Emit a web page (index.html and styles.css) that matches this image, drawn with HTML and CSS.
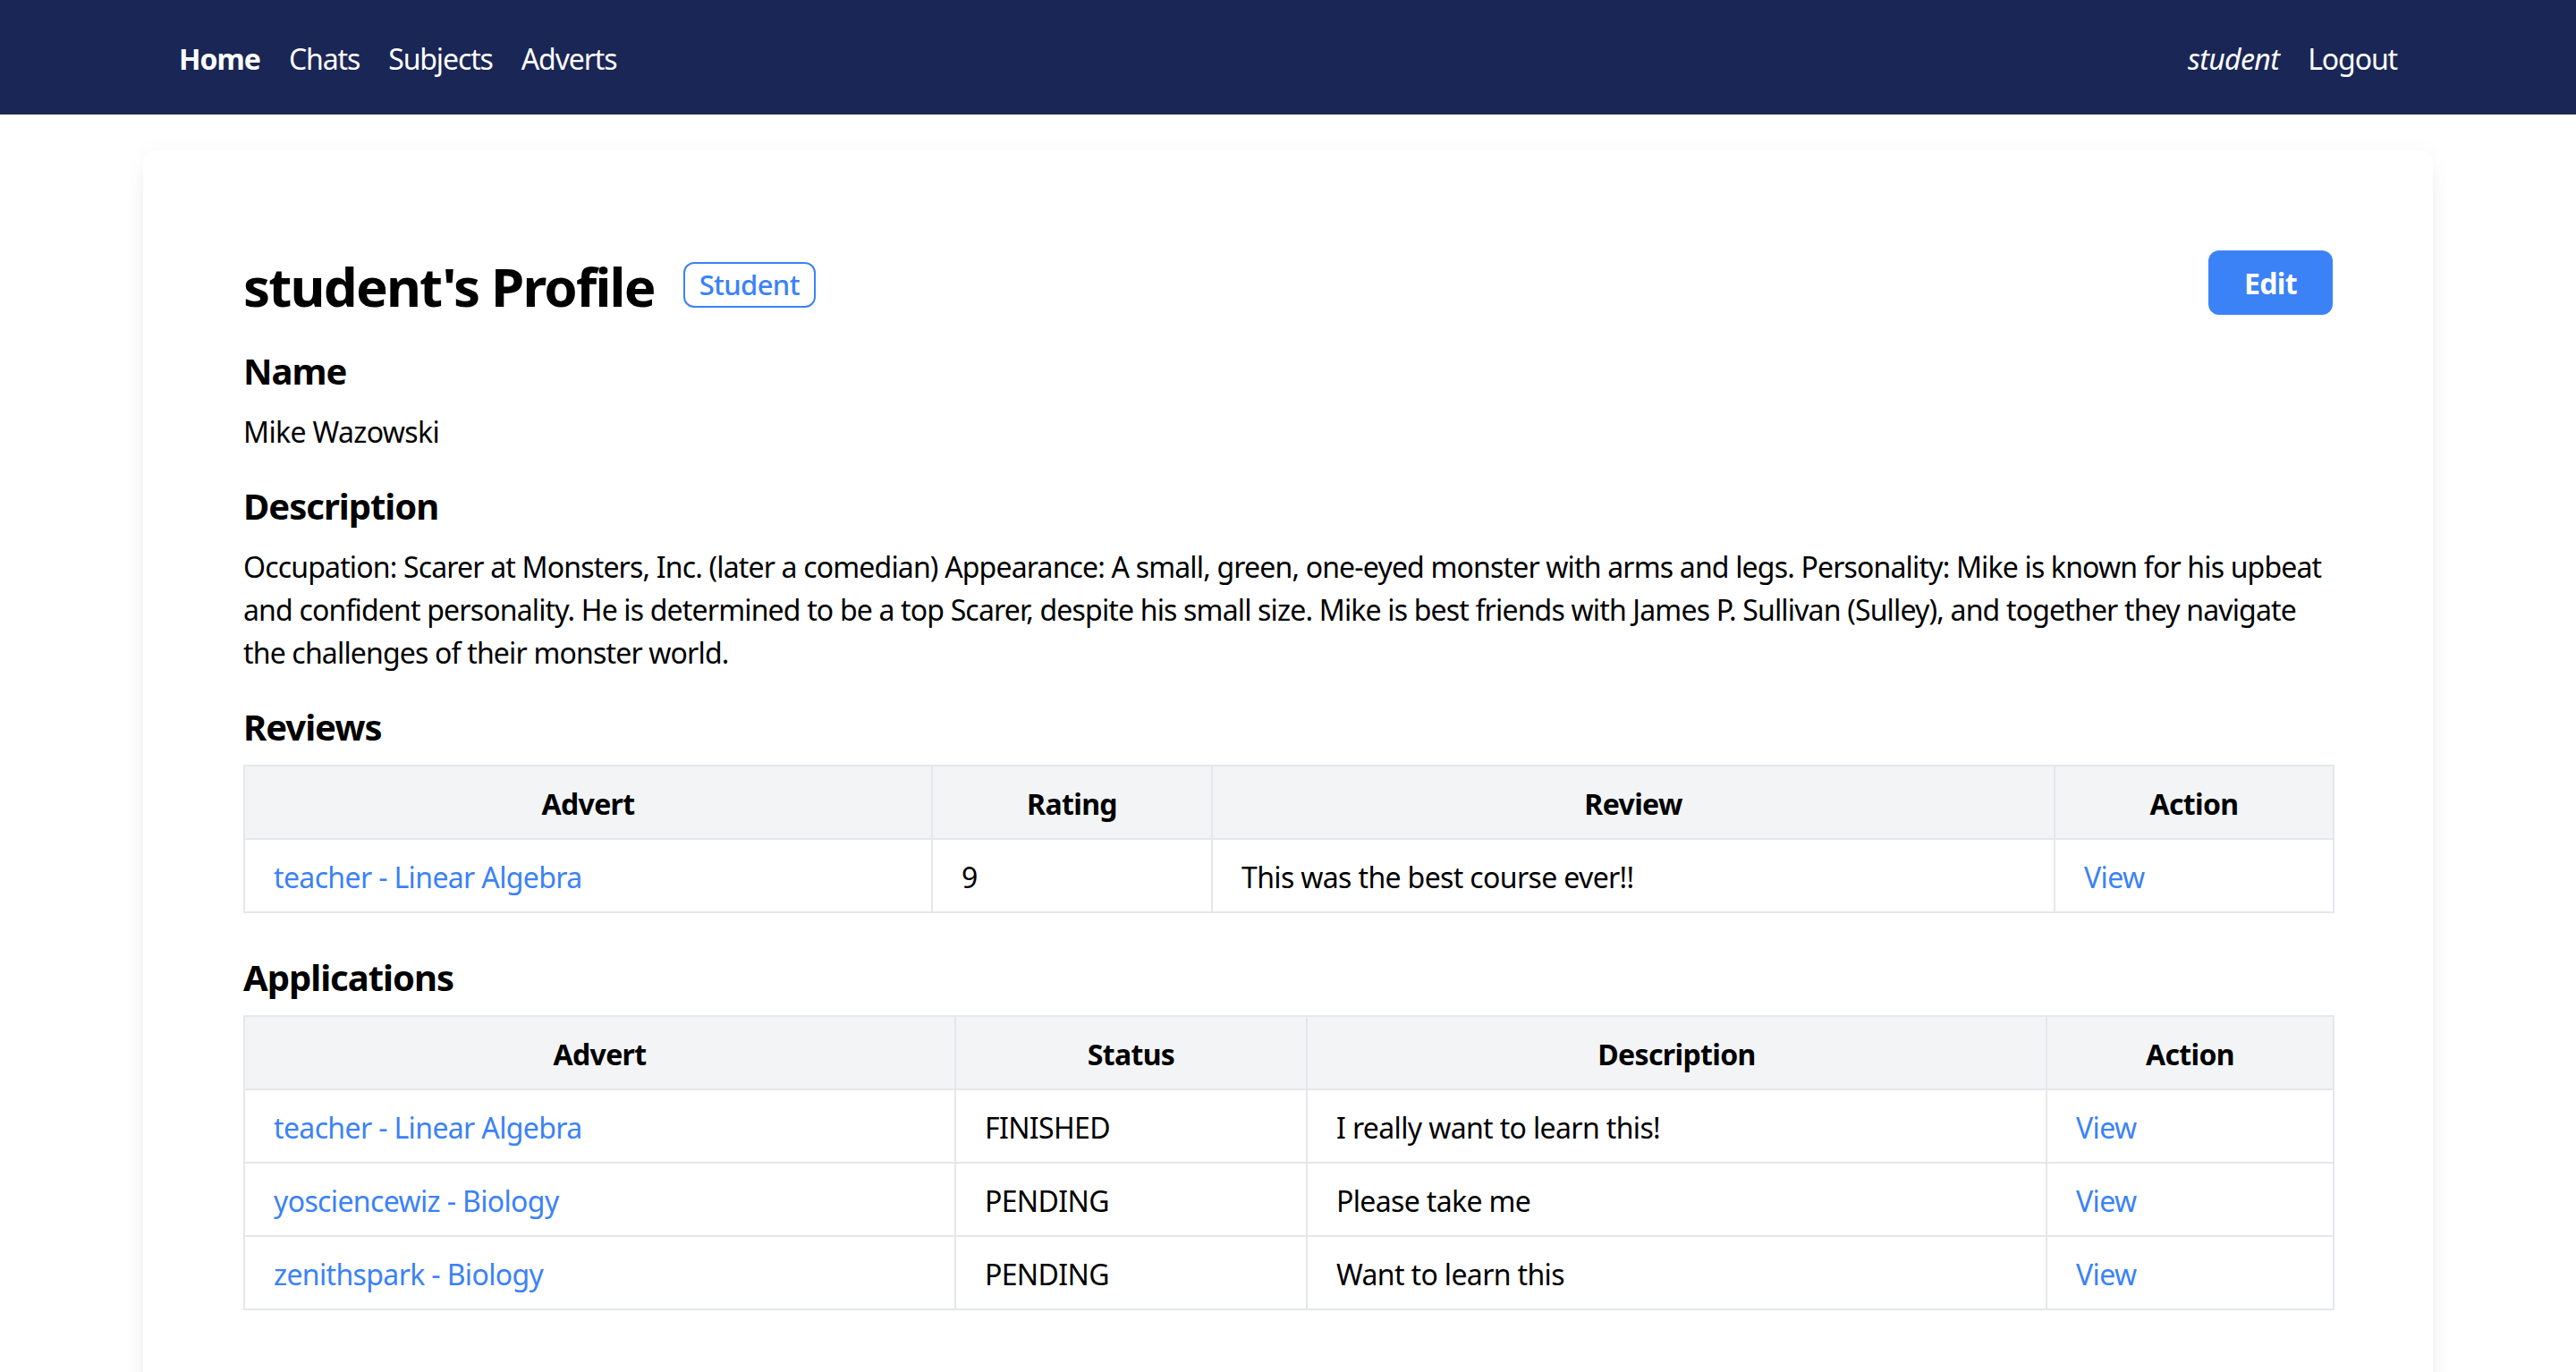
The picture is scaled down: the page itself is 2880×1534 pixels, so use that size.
FILE: index.html
```html
<!DOCTYPE html>
<html lang="en">
<head>
<meta charset="utf-8">
<title>student's Profile</title>
<link rel="stylesheet" href="styles.css">
</head>
<body>
<nav class="navbar">
  <div class="nav-group">
    <a class="nav-link active" href="#">Home</a>
    <a class="nav-link" href="#">Chats</a>
    <a class="nav-link" href="#">Subjects</a>
    <a class="nav-link" href="#">Adverts</a>
  </div>
  <div class="nav-group">
    <span class="nav-user">student</span>
    <a class="nav-link" href="#">Logout</a>
  </div>
</nav>
<main class="page">
  <section class="card">
    <div class="profile-header">
      <div class="title-group">
        <h1 class="profile-title">student's Profile</h1>
        <span class="badge">Student</span>
      </div>
      <button class="btn-edit" type="button">Edit</button>
    </div>

    <h2 class="section-title first">Name</h2>
    <p class="text">Mike Wazowski</p>

    <h2 class="section-title">Description</h2>
    <p class="text description">Occupation: Scarer at Monsters, Inc. (later a comedian) Appearance: A small, green, one-eyed monster with arms and legs. Personality: Mike is known for his upbeat and confident personality. He is determined to be a top Scarer, despite his small size. Mike is best friends with James P. Sullivan (Sulley), and together they navigate the challenges of their monster world.</p>

    <h2 class="section-title">Reviews</h2>
    <table class="data-table">
      <colgroup>
        <col class="rv-advert">
        <col class="rv-rating">
        <col class="rv-review">
        <col class="rv-action">
      </colgroup>
      <thead>
        <tr><th>Advert</th><th>Rating</th><th>Review</th><th>Action</th></tr>
      </thead>
      <tbody>
        <tr>
          <td><a class="link" href="#">teacher - Linear Algebra</a></td>
          <td>9</td>
          <td>This was the best course ever!!</td>
          <td><a class="link" href="#">View</a></td>
        </tr>
      </tbody>
    </table>

    <h2 class="section-title after-table">Applications</h2>
    <table class="data-table">
      <colgroup>
        <col class="ap-advert">
        <col class="ap-status">
        <col class="ap-desc">
        <col class="ap-action">
      </colgroup>
      <thead>
        <tr><th>Advert</th><th>Status</th><th>Description</th><th>Action</th></tr>
      </thead>
      <tbody>
        <tr>
          <td><a class="link" href="#">teacher - Linear Algebra</a></td>
          <td>FINISHED</td>
          <td>I really want to learn this!</td>
          <td><a class="link" href="#">View</a></td>
        </tr>
        <tr>
          <td><a class="link" href="#">yosciencewiz - Biology</a></td>
          <td>PENDING</td>
          <td>Please take me</td>
          <td><a class="link" href="#">View</a></td>
        </tr>
        <tr>
          <td><a class="link" href="#">zenithspark - Biology</a></td>
          <td>PENDING</td>
          <td>Want to learn this</td>
          <td><a class="link" href="#">View</a></td>
        </tr>
      </tbody>
    </table>
  </section>
</main>
</body>
</html>
```

FILE: styles.css
```css
* {
  box-sizing: border-box;
}

html, body {
  margin: 0;
  padding: 0;
  background: #ffffff;
}

body {
  font-family: "Noto Sans", "Open Sans", "Liberation Sans", sans-serif;
  font-size: 32px;
  line-height: 48px;
  color: #000000;
  letter-spacing: -0.02em;
}

/* Navbar */
.navbar {
  height: 128px;
  background: #1a2656;
  display: flex;
  align-items: center;
  justify-content: space-between;
  padding: 4px 200px 0;
}

.nav-group {
  display: flex;
  align-items: center;
  gap: 32px;
}

.nav-link {
  color: #ffffff;
  text-decoration: none;
  font-size: 32px;
  letter-spacing: -0.035em;
}

.nav-link.active {
  font-weight: 700;
  letter-spacing: -0.03em;
}

.nav-user {
  color: #ffffff;
  font-style: italic;
  letter-spacing: -0.02em;
}

/* Page */
.page {
  padding-top: 40px;
}

.card {
  max-width: 2560px;
  margin: 0 auto;
  background: #ffffff;
  border-radius: 16px;
  box-shadow: 0 20px 30px -6px rgba(0, 0, 0, 0.08), 0 8px 12px -8px rgba(0, 0, 0, 0.08), 0 0 24px rgba(0, 0, 0, 0.03);
  padding: 112px;
}

.profile-header {
  display: flex;
  align-items: center;
  justify-content: space-between;
}

.title-group {
  display: flex;
  align-items: center;
  gap: 32px;
}

.profile-title {
  margin: 4px 0 0;
  font-size: 60px;
  line-height: 72px;
  font-weight: 700;
  letter-spacing: -0.03em;
}

.badge {
  color: #3b82f6;
  border: 2px solid #3b82f6;
  border-radius: 12px;
  padding: 0 16px;
  font-size: 31px;
  line-height: 47px;
  font-weight: 500;
}

.btn-edit {
  align-self: flex-start;
  background: #3b82f6;
  color: #ffffff;
  border: none;
  border-radius: 12px;
  padding: 13px 40px 11px;
  font-family: inherit;
  font-size: 32px;
  line-height: 48px;
  font-weight: 700;
  letter-spacing: -0.02em;
}

.section-title {
  margin: 31px 0 16px;
  font-size: 40px;
  line-height: 56px;
  font-weight: 700;
  letter-spacing: -0.025em;
}

.section-title.first {
  margin-top: 31px;
}

.section-title.after-table {
  margin-top: 44px;
}

.text {
  margin: 0;
}

.description {
  letter-spacing: -0.026em;
}

/* Tables */
.data-table {
  width: 100%;
  table-layout: fixed;
  border-collapse: collapse;
  margin: -2px 0 0;
}

.data-table th,
.data-table td {
  border: 2px solid #e5e7eb;
  padding: 18px 32px 14px;
  text-align: left;
  font-weight: 400;
}

.data-table th {
  background: #f3f4f6;
  text-align: center;
  font-weight: 700;
}

.link {
  color: #3b82f6;
  text-decoration: none;
}

.rv-advert { width: 769px; }
.rv-rating { width: 313px; }
.rv-review { width: 942px; }
.rv-action { width: 312px; }

.ap-advert { width: 795px; }
.ap-status { width: 393px; }
.ap-desc { width: 827px; }
.ap-action { width: 321px; }
```
